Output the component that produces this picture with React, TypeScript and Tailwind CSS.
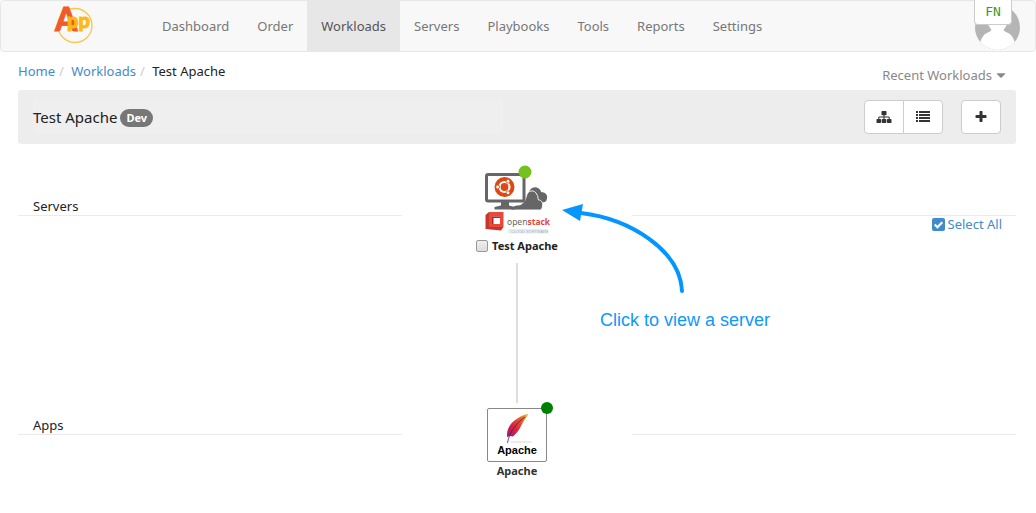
import { FaCaretDown } from "react-icons/fa";

const navItems = [
  "Dashboard",
  "Order",
  "Workloads",
  "Servers",
  "Playbooks",
  "Tools",
  "Reports",
  "Settings",
];

const iconButton =
  "flex h-[34px] w-10 items-center justify-center border border-[#ccc] bg-white text-[#333]";

function Logo() {
  return (
    <svg width="40" height="40" viewBox="0 0 40 40" className="overflow-visible" aria-label="App">
      <circle cx="21" cy="20.5" r="17" fill="none" stroke="#fbc54a" strokeWidth="1.3" />
      <g fontFamily="Lato, sans-serif" fontWeight="900" strokeWidth="0.9">
        <text x="1" y="26" fontSize="32" fill="#f15a29" stroke="#f15a29">
          A
        </text>
        <text x="13" y="23" fontSize="20" fill="#fdb913" stroke="#fdb913">
          pp
        </text>
      </g>
    </svg>
  );
}

function SitemapIcon() {
  return (
    <svg width="16" height="14" viewBox="0 0 16 14" fill="currentColor">
      <rect x="5.5" y="1" width="5" height="4.2" rx="0.8" />
      <rect x="0.5" y="9" width="4.6" height="4" rx="0.8" />
      <rect x="5.7" y="9" width="4.6" height="4" rx="0.8" />
      <rect x="10.9" y="9" width="4.6" height="4" rx="0.8" />
      <path d="M8 5v4M2.8 9V7h10.4v2" fill="none" stroke="currentColor" />
    </svg>
  );
}

function ListIcon() {
  return (
    <svg width="16" height="14" viewBox="0 0 16 14" fill="currentColor">
      <path d="M1 1h2v2H1zM4 1h11v2H4zM1 4h2v2H1zM4 4h11v2H4zM1 7h2v2H1zM4 7h11v2H4zM1 10h2v2H1zM4 10h11v2H4z" />
    </svg>
  );
}

function PlusIcon() {
  return (
    <svg width="14" height="14" viewBox="0 0 1792 1792" fill="currentColor">
      <path d="M1600 736v192q0 40-28 68t-68 28h-416v416q0 40-28 68t-68 28h-192q-40 0-68-28t-28-68v-416h-416q-40 0-68-28t-28-68v-192q0-40 28-68t68-28h416v-416q0-40 28-68t68-28h192q40 0 68 28t28 68v416h416q40 0 68 28t28 68z" />
    </svg>
  );
}

function Avatar() {
  return (
    <svg width="45" height="45" viewBox="0 0 45 45">
      <defs>
        <clipPath id="avatar">
          <circle cx="22.5" cy="22.5" r="22.5" />
        </clipPath>
      </defs>
      <g clipPath="url(#avatar)">
        <rect width="45" height="45" fill="#b5b5b5" />
        <ellipse cx="22.5" cy="15" rx="10" ry="12" fill="#fff" />
        <path d="M17 22h11c0 3 1 4 3 5 6 2 9 7 10 18H4c1-11 4-16 10-18 2-1 3-2 3-5z" fill="#fff" />
      </g>
    </svg>
  );
}

function ServerPicture() {
  return (
    <svg width="66" height="70" viewBox="0 0 66 70" className="block overflow-visible">
      <path
        d="M45 28c1-4 6-6 9-4 2 1 3 3 3 4 4 0 7 3 6 6 0 2-1 3-2 4l-6 1z"
        fill="#666"
      />
      <path
        d="M26.500 46c2-4 5-5 8-5 2 0 3-1 4-2 4-2 3-8 6-11 3-2 7-1 8 2 2 2 1 4 2 6 3 0 5 3 4 6 0 2-1 3-2 4z"
        fill="#666"
        stroke="#fff"
        strokeWidth="0.9"
      />
      <rect x="2.500" y="10.500" width="37.500" height="26.500" rx="1.5" fill="#fff" stroke="#666" strokeWidth="3" />
      <path d="M17 38h8v3.500l6 1.500v2.500H10.500V43l6.500-1.500z" fill="#666" />
      <circle cx="20.5" cy="23" r="10" fill="#dd4814" />
      <circle cx="20.5" cy="23" r="5" fill="none" stroke="#fff" strokeWidth="2.2" />
      <g fill="#fff" stroke="#dd4814" strokeWidth="0.8">
        <circle cx="13.7" cy="23" r="1.9" />
        <circle cx="24" cy="17.2" r="1.9" />
        <circle cx="24" cy="28.8" r="1.9" />
      </g>
      <circle cx="41" cy="8" r="6.5" fill="#74c11f" />
      <path d="M5 48h14.500v15L5 63z" fill="#e9483c" />
      <path d="M1.500 51L5 48v15l14.500 0-2.500 3.500-15.500-1.500z" fill="#c9342b" />
      <path d="M8 52.500h8V60H8z" fill="#fff" />
      <path d="M8 52.500h8V54H9.500v6H8z" fill="#a82a22" />
      <rect x="24" y="65" width="40" height="4.5" fill="#e6eef2" />
      <text x="23" y="61" fontFamily="Noto Sans, sans-serif" fontSize="8.5" fill="#666">
        open<tspan fontWeight="700" fill="#e0483c">stack</tspan>
      </text>
      <text x="27" y="68.500" fontFamily="Liberation Sans, sans-serif" fontSize="4" fill="#a9b7bf">
        CLOUD SOFTWARE
      </text>
    </svg>
  );
}

function ApachePicture() {
  return (
    <svg width="58" height="52" viewBox="0 0 58 52" className="block">
      <defs>
        <linearGradient id="feather" x1="0" y1="1" x2="1" y2="0">
          <stop offset="0" stopColor="#8a1f8c" />
          <stop offset="0.35" stopColor="#dd1e40" />
          <stop offset="0.7" stopColor="#ea5a26" />
          <stop offset="1" stopColor="#f9c02b" />
        </linearGradient>
      </defs>
      <ellipse cx="33" cy="33" rx="12" ry="1.3" fill="#ececec" />
      <path d="M40.500 5C33 6 24 12 21 18c-2 3-2 7-2 10l3-1 3 .5c3-3 6-6 7.500-9.500 1-2 2-4 3.500-6.500z" fill="url(#feather)" />
      <path d="M37 8C28 14 21 24 19.500 34" fill="none" stroke="#5c1a4a" strokeWidth="0.8" />
      <text x="29" y="45" textAnchor="middle" fontFamily="Liberation Sans, sans-serif" fontWeight="700" fontSize="11" fill="#000">
        Apache
      </text>
    </svg>
  );
}

function Callout() {
  return (
    <div className="pointer-events-none absolute left-40 top-[60px] w-[220px] text-[#0d98fb]">
      <svg width="124" height="92" viewBox="0 0 124 92" className="block">
        <path d="M0 6L21 0l-3 17z" fill="#0496ff" />
        <path d="M19 9C68 15 118 46 120 87" fill="none" stroke="#0496ff" strokeWidth="4" strokeLinecap="round" />
      </svg>
      <p className="ml-[38px] mt-3 whitespace-nowrap font-['Liberation_Sans',sans-serif] text-[18px] leading-6">
        Click to view a server
      </p>
    </div>
  );
}

export default function App() {
  return (
    <div className="min-h-screen bg-white pb-8 font-['Noto_Sans',sans-serif] text-[13px] leading-[18px] text-[#222]">
      <header className="relative flex h-[52px] rounded border border-[#e7e7e7] bg-[#f8f8f8]">
        <a href="#" className="ml-[53px] mr-[54px] mt-1">
          <Logo />
        </a>
        <nav className="-my-px flex text-[#777]">
          {navItems.map((item) => (
            <a
              key={item}
              href="#"
              className={
                item === "Workloads"
                  ? "flex items-center bg-[#e7e7e7] px-3.5 text-[#555]"
                  : "flex items-center px-3.5"
              }
            >
              {item}
            </a>
          ))}
        </nav>
        <div className="ml-auto mr-[15px] mt-1">
          <Avatar />
        </div>
        <span className="absolute -top-px right-[23px] flex h-[25px] w-[38px] items-center justify-center rounded-b border border-t-0 border-[#ccc] bg-white font-['DejaVu_Sans_Mono',monospace] text-[13px] text-[#3a9a2d]">
          FN
        </span>
      </header>

      <main className="pl-[18px] pr-5">
        <div className="flex h-[38px] items-center justify-between">
          <ol className="flex">
            <li>
              <a href="#" className="text-[#428bca]">Home</a>
              <span className="px-1 text-[#ccc]">/&nbsp;</span>
            </li>
            <li>
              <a href="#" className="text-[#428bca]">Workloads</a>
              <span className="px-1 text-[#ccc]">/&nbsp;</span>
            </li>
            <li>Test Apache</li>
          </ol>
          <button className="mr-2 mt-2 flex items-center gap-0.5 text-[#888]">
            Recent Workloads
            <FaCaretDown size={14} />
          </button>
        </div>

        <div className="flex h-[54px] items-center rounded-[3px] bg-[#ededed] px-[15px]">
          <div className="flex h-[34px] w-[470px] items-center gap-[3px] rounded bg-[#efefef]">
            <h1 className="text-[15px]">Test Apache</h1>
            <span className="mt-0.5 rounded-full bg-[#777] px-[6px] text-[11px] font-bold text-white">Dev</span>
          </div>
          <div className="ml-auto flex">
            <button aria-label="Diagram" className={`${iconButton} rounded-l`}>
              <SitemapIcon />
            </button>
            <button aria-label="List" className={`${iconButton} -ml-px rounded-r`}>
              <ListIcon />
            </button>
          </div>
          <button aria-label="Add" className={`${iconButton} ml-[18px] rounded`}>
            <PlusIcon />
          </button>
        </div>

        {/* Servers */}
        <section className="grid grid-cols-[1fr_230px_1fr] items-start">
          <h2 className="mt-[53px] border-b border-[#ebebeb] pl-[15px]">Servers</h2>
          <div className="relative flex flex-col items-center pt-5">
            <a href="#" aria-label="Test Apache server">
              <ServerPicture />
            </a>
            <label className="mt-[3px] flex items-center gap-1 text-[11px] font-bold">
              <input
                type="checkbox"
                className="size-3 appearance-none rounded-[2px] border border-[#999] bg-gradient-to-b from-[#eee] to-[#ddd]"
              />
              Test Apache
            </label>
            <div className="mt-2 h-[140px] w-0.5 bg-[#ddd]" />
            <Callout />
          </div>
          <div className="mt-[71px] flex justify-end border-t border-[#ebebeb] pr-[14px]">
            <label className="flex items-center gap-[3px] leading-4 text-[#428bca]">
              <span className="relative">
                <input
                  type="checkbox"
                  defaultChecked
                  className="block size-[13px] appearance-none rounded-[2px] bg-[#428bca]"
                />
                <svg viewBox="0 0 12 12" className="pointer-events-none absolute inset-0 size-[13px]">
                  <path d="M2.5 6L5 8.5 9.5 4" fill="none" stroke="#fff" strokeWidth="2" />
                </svg>
              </span>
              Select All
            </label>
          </div>
        </section>

        {/* Apps */}
        <section className="grid grid-cols-[1fr_230px_1fr] items-start">
          <h2 className="mt-[13px] border-b border-[#ebebeb] pl-[15px]">Apps</h2>
          <div className="flex flex-col items-center pt-[5px]">
            <a href="#" className="relative rounded-[2px] border border-[#888]">
              <ApachePicture />
              <span className="absolute -right-[7px] -top-[7px] size-3 rounded-full bg-[#008000]" />
            </a>
            <p className="text-[11px] font-bold text-[#333]">Apache</p>
          </div>
          <div className="mt-[31px] border-t border-[#ebebeb]" />
        </section>
      </main>
    </div>
  );
}
